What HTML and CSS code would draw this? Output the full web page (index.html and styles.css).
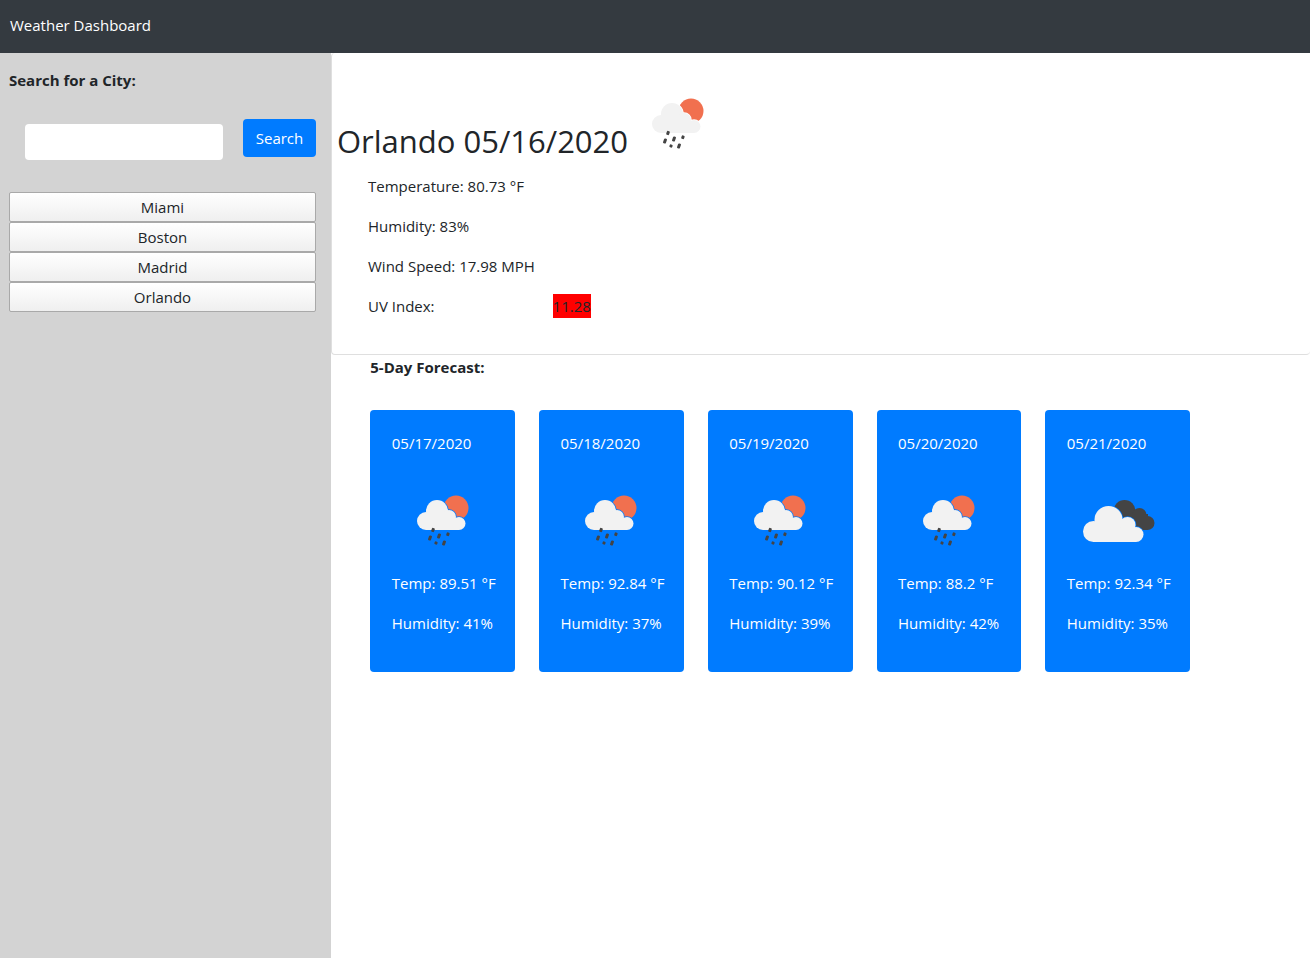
FILE: index.html
```html
<!DOCTYPE html>
<html lang="en">
<head>
<meta charset="utf-8">
<title>Weather Dashboard</title>
<link rel="stylesheet" href="styles.css">
</head>
<body>
<svg class="defs" width="0" height="0" aria-hidden="true">
  <defs>
    <g id="rain-cloud">
      <circle cx="13" cy="32" r="9"/>
      <circle cx="24" cy="22" r="11"/>
      <circle cx="36" cy="28" r="7"/>
      <circle cx="46" cy="34.500" r="6.500"/>
      <rect x="13" y="29" width="33" height="12"/>
    </g>
    <mask id="rain-mask" maskUnits="userSpaceOnUse" x="0" y="0" width="60" height="60">
      <rect width="60" height="60" fill="#fff"/>
      <use href="#rain-cloud" fill="#000" stroke="#000" stroke-width="1.500"/>
    </mask>
    <g id="grey-cloud">
      <circle cx="15.500" cy="43.500" r="10.500"/>
      <circle cx="30.500" cy="32" r="14"/>
      <circle cx="49.500" cy="37" r="8"/>
      <circle cx="58" cy="46.500" r="7.500"/>
      <rect x="15" y="40" width="43" height="14"/>
    </g>
    <mask id="grey-mask" maskUnits="userSpaceOnUse" x="0" y="0" width="80" height="63">
      <rect width="80" height="63" fill="#fff"/>
      <use href="#grey-cloud" fill="#000" stroke="#000" stroke-width="1.500"/>
    </mask>
  </defs>
  <symbol id="rain" viewBox="0 0 60 60">
    <circle cx="43" cy="19" r="12.500" fill="#f1704f" mask="url(#rain-mask)"/>
    <use href="#rain-cloud" fill="#f2f2f2"/>
    <g fill="#444">
      <rect x="18.500" y="39" width="3" height="4" rx="1" transform="rotate(20 20 41)"/>
      <rect x="15.500" y="46.500" width="3" height="5" rx="1" transform="rotate(20 17 49)"/>
      <rect x="24.500" y="44.500" width="3" height="5" rx="1" transform="rotate(20 26 47)"/>
      <rect x="33.500" y="43.500" width="3" height="3.500" rx="1" transform="rotate(20 35 45)"/>
      <rect x="21.500" y="52.500" width="3" height="3" rx="1" transform="rotate(20 23 54)"/>
      <rect x="29.500" y="51.500" width="3" height="5" rx="1" transform="rotate(20 31 54)"/>
    </g>
  </symbol>
  <symbol id="cloudy" viewBox="0 0 80 63">
    <g fill="#444" mask="url(#grey-mask)">
      <circle cx="46.500" cy="23" r="11"/>
      <circle cx="61.500" cy="27" r="7"/>
      <circle cx="69.500" cy="35" r="7"/>
      <rect x="46" y="26" width="24" height="16"/>
    </g>
    <use href="#grey-cloud" fill="#f2f2f2"/>
  </symbol>
</svg>
<nav class="navbar">Weather Dashboard</nav>
<div class="layout">
  <aside class="sidebar">
    <h2 class="side-title">Search for a City:</h2>
    <form class="search">
      <input class="search-input" type="text" aria-label="City">
      <button class="search-btn" type="button">Search</button>
    </form>
    <div class="history">
      <button class="city" type="button">Miami</button>
      <button class="city" type="button">Boston</button>
      <button class="city" type="button">Madrid</button>
      <button class="city" type="button">Orlando</button>
    </div>
  </aside>
  <main class="main">
    <section class="current">
      <div class="current-head">
        <h1 class="current-title">Orlando 05/16/2020</h1>
        <svg class="current-icon"><use href="#rain"/></svg>
      </div>
      <p class="stat">Temperature: 80.73 °F</p>
      <p class="stat">Humidity: 83%</p>
      <p class="stat">Wind Speed: 17.98 MPH</p>
      <p class="stat">UV Index:<span class="uv">11.28</span></p>
    </section>
    <section class="forecast">
      <h2 class="forecast-title">5-Day Forecast:</h2>
      <div class="cards">
        <article class="card"><p class="date">05/17/2020</p><svg class="icon"><use href="#rain"/></svg><p class="line">Temp: 89.51 °F</p><p class="line">Humidity: 41%</p></article>
        <article class="card"><p class="date">05/18/2020</p><svg class="icon"><use href="#rain"/></svg><p class="line">Temp: 92.84 °F</p><p class="line">Humidity: 37%</p></article>
        <article class="card"><p class="date">05/19/2020</p><svg class="icon"><use href="#rain"/></svg><p class="line">Temp: 90.12 °F</p><p class="line">Humidity: 39%</p></article>
        <article class="card"><p class="date">05/20/2020</p><svg class="icon"><use href="#rain"/></svg><p class="line">Temp: 88.2 °F</p><p class="line">Humidity: 42%</p></article>
        <article class="card"><p class="date">05/21/2020</p><svg class="icon icon-wide"><use href="#cloudy"/></svg><p class="line">Temp: 92.34 °F</p><p class="line">Humidity: 35%</p></article>
      </div>
    </section>
  </main>
</div>
</body>
</html>
```
FILE: styles.css
```css
* { box-sizing: border-box; }
html, body { height: 100%; }
body {
  margin: 0;
  font-family: "Open Sans", "Noto Sans", sans-serif;
  font-size: 15px;
  line-height: 24px;
  color: #212529;
  background: #fff;
  display: flex;
  flex-direction: column;
  overflow: hidden;
}
.defs { position: absolute; }
.navbar {
  height: 53px;
  flex: none;
  background: #343a40;
  color: #fff;
  font-size: 15px;
  padding: 13px 10px 0;
}
.layout { flex: 1; display: flex; min-height: 0; }
.sidebar {
  width: 331px;
  flex: none;
  background: #d3d3d3;
  padding: 15px 15px 0 9px;
}
.side-title { margin: 0; font-size: 15px; font-weight: 700; line-height: 24px; }
.search { display: flex; align-items: flex-start; margin-top: 27px; padding-left: 16px; }
.search-input {
  width: 198px;
  height: 36px;
  margin-top: 5px;
  border: 0;
  border-radius: 4px;
  background: #fff;
}
.search-btn {
  width: 73px;
  height: 38px;
  margin-left: 20px;
  border: 0;
  border-radius: 4px;
  background: #007bff;
  color: #fff;
  font: inherit;
}
.history { display: flex; flex-direction: column; margin-top: 32px; }
.city {
  width: 307px;
  height: 30px;
  padding: 0;
  border: 1px solid #a9a9a9;
  border-radius: 2px;
  background: linear-gradient(#fff, #efefef);
  color: #212529;
  font: inherit;
}
.main { flex: 1; min-width: 0; }
.current {
  height: 302px;
  padding: 37px 36px 0 5px;
  border-left: 1px solid #dfdfdf;
  border-bottom: 1px solid #dfdfdf;
  border-radius: 4px;
}
.current-head { display: flex; align-items: flex-start; height: 84px; }
.current-title { margin: 30px 0 0; font-size: 31px; line-height: 42px; font-weight: 500; white-space: nowrap; }
.current-icon { width: 60px; height: 60px; margin: 2px 0 0 20px; }
.stat { margin: 0 0 16px 31px; }
.uv {
  display: inline-block;
  margin-left: 118px;
  background: #f00;
}
.forecast { padding: 0 0 0 39.3px; }
.forecast-title { margin: 0; font-size: 15px; font-weight: 700; line-height: 24px; }
.cards { display: flex; gap: 24px; margin-top: 31px; }
.card {
  width: 144.75px;
  height: 262px;
  padding: 21px 21.5px 0;
  border-radius: 4px;
  background: #007bff;
  color: #fff;
}
.date { margin: 0; }
.icon { display: block; width: 60px; height: 60px; margin: 34px auto 22px; }
.icon-wide { width: 80px; height: 63px; margin: 33px auto 20px; }
.line { margin: 0 0 16px; white-space: nowrap; }
```
